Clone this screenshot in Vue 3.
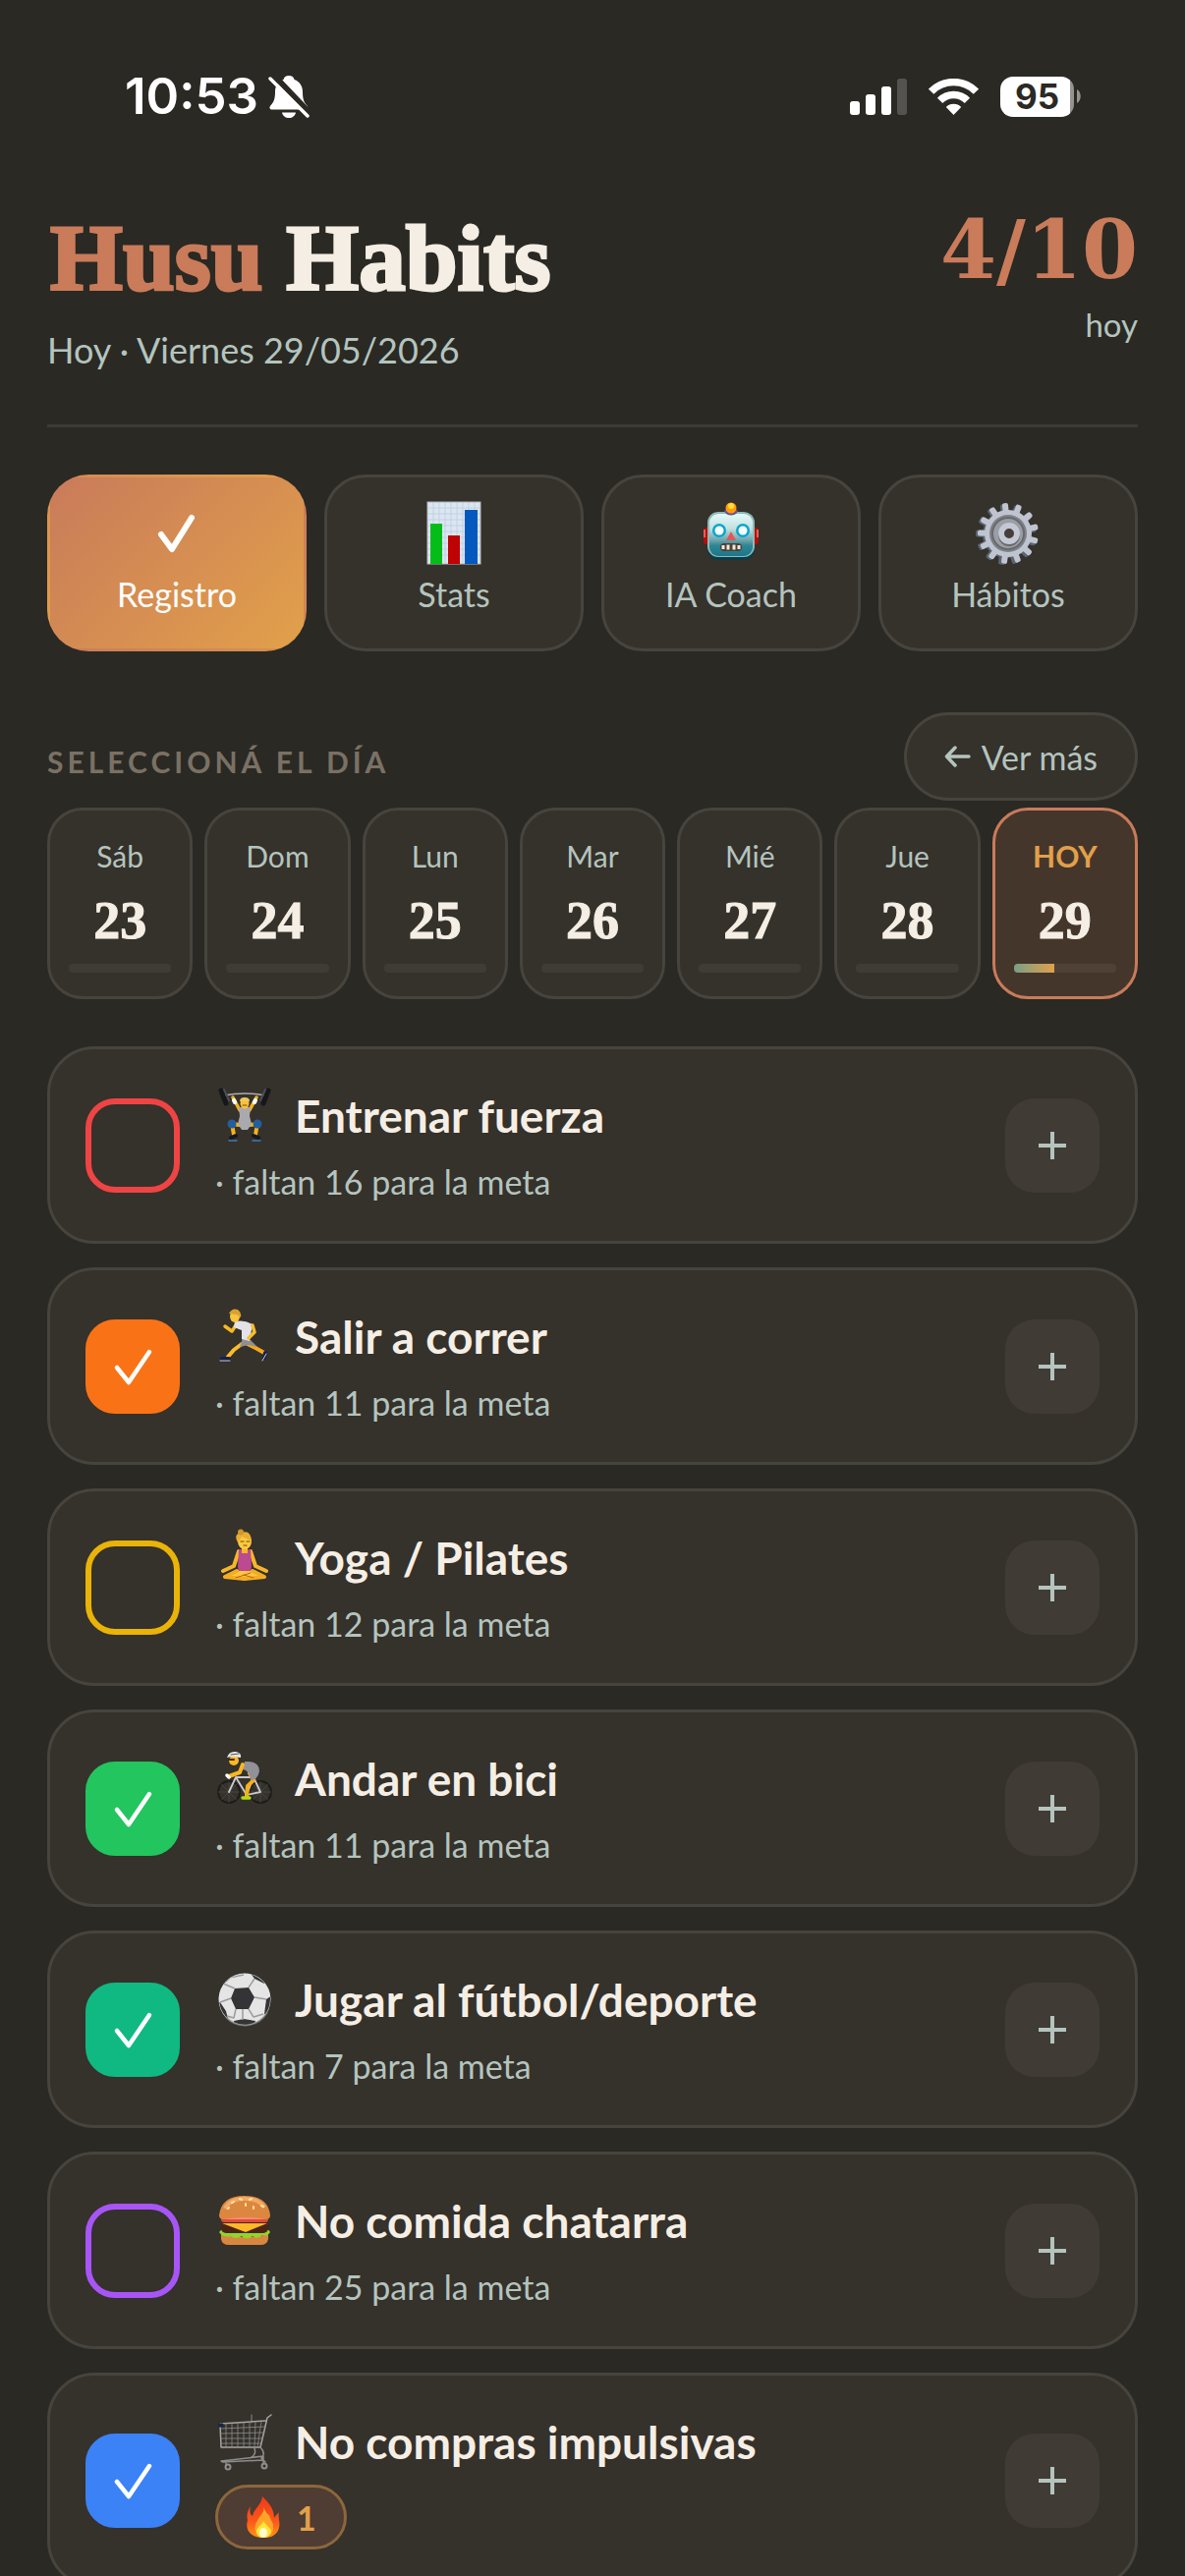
<script setup>
import { ref } from 'vue'

const tabs = [
  { id: 'registro', label: 'Registro', icon: 'check' },
  { id: 'stats', label: 'Stats', icon: 'chart' },
  { id: 'coach', label: 'IA Coach', icon: 'robot' },
  { id: 'habitos', label: 'Hábitos', icon: 'gear' }
]
const activeTab = ref('registro')

const days = [
  { name: 'Sáb', number: 23, progress: 0 },
  { name: 'Dom', number: 24, progress: 0 },
  { name: 'Lun', number: 25, progress: 0 },
  { name: 'Mar', number: 26, progress: 0 },
  { name: 'Mié', number: 27, progress: 0 },
  { name: 'Jue', number: 28, progress: 0 },
  { name: 'HOY', number: 29, progress: 40 }
]
const selectedDay = ref(29)

const habits = ref([
  { id: 'fuerza', name: 'Entrenar fuerza', color: '#ef4444', done: false, left: 16 },
  { id: 'correr', name: 'Salir a correr', color: '#f97316', done: true, left: 11 },
  { id: 'yoga', name: 'Yoga / Pilates', color: '#eab308', done: false, left: 12 },
  { id: 'bici', name: 'Andar en bici', color: '#22c55e', done: true, left: 11 },
  { id: 'futbol', name: 'Jugar al fútbol/deporte', color: '#10b981', done: true, left: 7 },
  { id: 'comida', name: 'No comida chatarra', color: '#a855f7', done: false, left: 25 },
  { id: 'compras', name: 'No compras impulsivas', color: '#3b82f6', done: true, streak: 1 }
])

const teeth = Array.from({ length: 13 }, (_, i) => (i * 360) / 13 - 6)
</script>

<template>
  <div class="screen">
    <div class="status">
      <div class="status-left">
        <span class="time">10:53</span>
        <svg width="42" height="46" viewBox="0 0 42 46" aria-hidden="true">
          <path d="M21 2c3 0 5 1.500 5.500 4 5.500 2 8.500 6.500 8.500 12.500 0 8 1.500 10.500 4.500 14 1.600 2 .8 4-1.500 4H4c-2.500 0-3.300-2-1.700-4 3-3.500 4.700-6 4.700-14C7 12.500 10 8 15.500 6 16 3.500 18 2 21 2z" fill="#fff" />
          <path d="M14 39.500h14c-.6 3.500-3.500 5.500-7 5.500s-6.400-2-7-5.500z" fill="#fff" />
          <path d="M5 1 43 41" stroke="#2a2924" stroke-width="6" />
          <path d="M2 5 40 43" stroke="#fff" stroke-width="3.500" stroke-linecap="round" />
        </svg>
      </div>
      <div class="status-right">
        <svg width="58" height="37" viewBox="0 0 58 37" fill="#fff" aria-hidden="true">
          <rect y="23" width="10" height="14" rx="3" />
          <rect x="16" y="16" width="10" height="21" rx="3" />
          <rect x="32" y="8" width="10" height="29" rx="3" />
          <rect x="48" width="10" height="37" rx="3" fill="#54534f" />
        </svg>
        <svg width="51" height="37" viewBox="0 0 51 37" aria-hidden="true">
          <g fill="none" stroke="#fff" stroke-width="7.500">
            <path d="M2.600 13.200a32 32 0 0 1 45.800 0" />
            <path d="M11.600 22.300a19.500 19.500 0 0 1 27.800 0" />
          </g>
          <path d="M25.500 37 17.800 28.900a11 11 0 0 1 15.400 0z" fill="#fff" />
        </svg>
        <div class="battery">
          <span class="battery-level">95</span>
          <svg width="4" height="14" viewBox="0 0 4 14" aria-hidden="true"><path d="M0 0c5 3 5 11 0 14z" fill="#94938f" /></svg>
        </div>
      </div>
    </div>

    <main class="page">
      <header class="header">
        <div>
          <h1 class="title"><span class="accent">Husu</span> Habits</h1>
          <p class="date">Hoy · Viernes 29/05/2026</p>
        </div>
        <div class="summary">
          <div class="score">4/10</div>
          <div class="score-label">hoy</div>
        </div>
      </header>

      <nav class="tabs">
        <button v-for="tab in tabs" :key="tab.id" type="button" class="tab" :class="{ active: tab.id === activeTab }" @click="activeTab = tab.id">
          <svg class="tab-icon" viewBox="0 0 66 66" aria-hidden="true">
            <path v-if="tab.icon === 'check'" d="M17 34 28 49 48 17" fill="none" stroke="#fff" stroke-width="6" stroke-linecap="round" stroke-linejoin="round" />
            <g v-else-if="tab.icon === 'chart'">
              <rect x="6" y="1" width="54" height="63" fill="#dce6f0" />
              <path d="M6 7h54M6 13h54M6 19h54M6 25h54M6 31h54M6 37h54M6 43h54M6 49h54M6 55h54M12 1v63M18 1v63M24 1v63M30 1v63M36 1v63M42 1v63M48 1v63M54 1v63" stroke="#bfd2e4" stroke-width="1" />
              <rect x="6" y="1" width="54" height="63" fill="none" stroke="#b4b8bd" />
              <rect x="9" y="23" width="12" height="41" fill="#04bd19" />
              <rect x="27" y="35" width="12" height="29" fill="#bd0303" />
              <rect x="44" y="9" width="13" height="55" fill="#0558be" />
            </g>
            <g v-else-if="tab.icon === 'robot'">
              <defs>
                <linearGradient id="robot-face" x1="0" y1="0" x2="0" y2="1">
                  <stop offset="0" stop-color="#e2fbf8" /><stop offset=".35" stop-color="#c3e0df" /><stop offset=".62" stop-color="#6fa5ac" /><stop offset=".75" stop-color="#2f8594" /><stop offset="1" stop-color="#1c7688" />
                </linearGradient>
              </defs>
              <rect x="5" y="27" width="8" height="17" rx="3" fill="#b30d0d" />
              <rect x="53" y="27" width="8" height="17" rx="3" fill="#b30d0d" />
              <path d="M6 29v8M60 29v8" stroke="#ff5a4a" stroke-width="2" />
              <rect x="9" y="12" width="48" height="48" rx="11" fill="#0b3c49" />
              <rect x="9" y="11" width="48" height="46" rx="11" fill="#8fb9ba" />
              <rect x="11" y="13" width="44" height="43" rx="9" fill="url(#robot-face)" />
              <path d="M26 10c3-4 11-4 14 0-2 6-12 6-14 0z" fill="#70518e" />
              <circle cx="33" cy="7" r="5.500" fill="#ff9d0a" /><circle cx="33" cy="5" r="3" fill="#ffdc3a" />
              <circle cx="21" cy="30" r="7" fill="#0aa5cf" /><circle cx="45" cy="30" r="7" fill="#0aa5cf" />
              <circle cx="21" cy="30" r="4.500" fill="#f3fdff" /><circle cx="45" cy="30" r="4.500" fill="#f3fdff" />
              <path d="M33 31 38 40H28z" fill="#e0575a" />
              <rect x="22" y="43" width="22" height="8" rx="4" fill="#4c4139" />
              <path d="M25 45v4M30 44.500v5M36 44.500v5M41 45v4" stroke="#efe9d8" stroke-width="3" />
            </g>
            <g v-else>
              <g transform="translate(-2 1)" fill="#596573">
                <rect v-for="a in teeth" :key="a" x="30" y="2" width="7" height="14" rx="2" :transform="`rotate(${a} 33 33)`" />
                <circle cx="33" cy="33" r="24" />
              </g>
              <g fill="#c0c4d0">
                <rect v-for="a in teeth" :key="a" x="30" y="2" width="6" height="14" rx="2" :transform="`rotate(${a} 33 33)`" />
                <circle cx="33" cy="33" r="24" />
              </g>
              <circle cx="33" cy="33" r="19" fill="#7e8288" />
              <circle cx="33" cy="33" r="16" fill="#9a9ea5" stroke="#676b70" stroke-width="2" />
              <circle cx="34" cy="35" r="11" fill="#6a6668" />
              <circle cx="34" cy="33" r="8" fill="#463e3b" stroke="#c3c8d4" stroke-width="6" />
            </g>
          </svg>
          <span>{{ tab.label }}</span>
        </button>
      </nav>

      <div class="section-head">
        <h2 class="section-title">Seleccioná el día</h2>
        <button type="button" class="more">
          <svg width="27" height="24" viewBox="0 0 27 24" aria-hidden="true"><path d="M25 12H3M11 3 2.500 12l8.500 9" fill="none" stroke="currentColor" stroke-width="3.500" stroke-linecap="round" stroke-linejoin="round" /></svg>
          Ver más
        </button>
      </div>

      <div class="days">
        <button v-for="day in days" :key="day.number" type="button" class="day" :class="{ selected: day.number === selectedDay }" @click="selectedDay = day.number">
          <span class="day-name">{{ day.name }}</span>
          <span class="day-number">{{ day.number }}</span>
          <span class="bar"><span class="bar-fill" :style="{ width: day.progress + '%' }"></span></span>
        </button>
      </div>

      <ul class="habits">
        <li v-for="habit in habits" :key="habit.id" class="habit">
          <span class="box">
            <input :id="habit.id" v-model="habit.done" type="checkbox" class="check" :style="{ '--tone': habit.color }" />
            <svg v-if="habit.done" class="tick" viewBox="0 0 96 96" aria-hidden="true"><path d="M32 49 44 64 65 33" fill="none" stroke="#fff" stroke-width="4.500" stroke-linecap="round" stroke-linejoin="round" /></svg>
          </span>
          <div class="info">
            <label :for="habit.id" class="name">
              <svg class="emoji" viewBox="0 0 60 60" aria-hidden="true">
                <g v-if="habit.id === 'fuerza'" fill="none" stroke-linecap="round" stroke-linejoin="round">
                  <path d="M9 9Q30 5 51 9" stroke="#a9adb1" stroke-width="1.500" />
                  <path d="M18 11 25 24M42 11 35 24" stroke="#f5b31c" stroke-width="3.500" />
                  <path d="M19 14l1 2M41 14l-1 2" stroke="#fff" stroke-width="4" />
                  <path d="M25 39 17 38 19 49M35 39 43 38 41 49" stroke="#f5b31c" stroke-width="4" />
                  <path d="M24 21h12l-1 9 2 8-4 6h-6l-4-6 2-8z" fill="#a9a9ae" />
                  <circle cx="17" cy="38" r="4.500" fill="#235f9d" /><circle cx="43" cy="38" r="4.500" fill="#235f9d" />
                  <path d="M16 52l5-2M44 52l-5-2" stroke="#17191f" stroke-width="4" />
                  <path d="M14 55h8M46 55h-8" stroke="#3a7cb8" stroke-width="1.500" />
                  <ellipse cx="30" cy="17" rx="4.500" ry="5.500" fill="#f9c13a" /><path d="M25 15q0-4 5-4t5 4z" fill="#edc95d" /><path d="M28 19h4" stroke="#7a4d1c" stroke-width="1" />
                  <path d="M6 4 11 17M54 4 49 17" stroke="#16171a" stroke-width="5" />
                  <path d="M9 3 14 14M51 3 46 14" stroke="#4a4d52" stroke-width="2" />
                </g>
                <g v-else-if="habit.id === 'correr'" fill="none" stroke-linecap="round" stroke-linejoin="round">
                  <path d="M21 18 17 24 10 19" stroke="#f7b825" stroke-width="3.500" />
                  <path d="M33 37 41 41 50 46" stroke="#f3a91c" stroke-width="4" />
                  <path d="M27 37 19 43 13 50" stroke="#f9bd2c" stroke-width="4" />
                  <path d="M36 33 43 40 34 38 25 40 28 31z" fill="#8f8f93" />
                  <path d="M20 14Q30 12 38 17L35 34 27 32 27 23 19 20z" fill="#e3e2e7" />
                  <path d="M38 18 40 25 34 31" stroke="#f9bd2c" stroke-width="3.500" />
                  <path d="M7 52 14 52M51 46 50 51" stroke="#16214e" stroke-width="4" />
                  <path d="M5 54h10M48 54l4-7" stroke="#c9cad4" stroke-width="1" />
                  <ellipse cx="20" cy="9" rx="5" ry="6" fill="#f9c43e" /><path d="M14 6q3-6 9-4 4 3 3 8l-4-3z" fill="#d7a22f" />
                </g>
                <g v-else-if="habit.id === 'yoga'" fill="none" stroke-linecap="round" stroke-linejoin="round">
                  <path d="M24 23 19 38 8 43M36 23 41 38 52 43" stroke="#f6b62b" stroke-width="4" />
                  <path d="M24 21h12l1 18-2 7H25l-2-7z" fill="#bb4a91" />
                  <path d="M27 20h6v5h-6z" fill="#f6b62b" />
                  <path d="M22 43 10 49 30 51 50 49 38 43" fill="#ffc640" stroke="#f2ad22" stroke-width="4" />
                  <path d="M21 50 36 45M39 50 29 47" stroke="#b96813" stroke-width="1" />
                  <ellipse cx="30" cy="13" rx="7" ry="8" fill="#fcca3d" />
                  <path d="M23 14Q18 5 27 4 36 1 37 12 31 10 27 8z" fill="#e8ae32" /><circle cx="26" cy="3.500" r="3" fill="#d4972a" />
                  <path d="M26 13h3M32 13h3M29 17h3" stroke="#724318" stroke-width="1.200" />
                </g>
                <g v-else-if="habit.id === 'bici'" fill="none" stroke-linecap="round" stroke-linejoin="round">
                  <g stroke="#1b1b1a" stroke-width="1.800"><circle cx="14" cy="43" r="11" /><circle cx="46" cy="43" r="11" /></g>
                  <path d="M14 32v22M3 43h22M6 35l16 16M22 35 6 51M46 32v22M35 43h22M38 35l16 16M54 35 38 51" stroke="#66655f" stroke-width=".4" />
                  <path d="M14 43 21 28H39L32 46 21 28M39 28 46 43 32 46" stroke="#c8cace" stroke-width="1.800" />
                  <path d="M35 24 39 31 33 37 32 47" stroke="#f5af18" stroke-width="4" />
                  <path d="M30 12Q45 11 45 22 43 31 36 31 35 21 28 20z" fill="#919197" />
                  <path d="M28 15 25 23 14 27" stroke="#f7b721" stroke-width="4" /><path d="M12 26l2 2" stroke="#fff" stroke-width="3.500" />
                  <path d="M28 49h7" stroke="#b2db12" stroke-width="3.500" />
                  <circle cx="19" cy="11" r="5" fill="#f8b926" /><path d="M12 8Q14 1 21 2 27 3 26 8L16 7z" fill="#e6e5e2" /><path d="M16 5l8-1" stroke="#55565b" /><path d="M14 10h5" stroke="#4c2a0b" stroke-width="2" />
                </g>
                <g v-else-if="habit.id === 'futbol'">
                  <clipPath id="ball"><circle cx="30" cy="29" r="26" /></clipPath>
                  <circle cx="30" cy="29" r="26.500" fill="#e5e5e5" />
                  <g clip-path="url(#ball)">
                    <path d="M20 18 34 17 40 27 34 39H21L16 28zM35 1 50 7 50 13 40 8zM59 24 52 29 50 44 58 46zM2 10l8-4 5 2-8 7zM1 33l4-1 6 9 2 8-7-3zM19 51l10-2 12 2-2 8H20z" fill="#343436" />
                    <path d="M20 18 8 13M34 17 40 8M40 27l12 2M34 39l5 8M21 39l-2 9M16 28 5 32M15 7l14-3M39 47l10-3M19 48 12 46M28 39v11" stroke="#9b9b9b" stroke-width="1.500" fill="none" />
                  </g>
                  <path d="M11 47a26 26 0 0 0 42-5" stroke="#8c8c8c" stroke-width="2" fill="none" opacity=".6" />
                </g>
                <g v-else-if="habit.id === 'comida'">
                  <path d="M6 43q24 6 48 0v5q-1 6-8 6H14q-7 0-8-6z" fill="#d98740" />
                  <path d="M4 41q3-4 9-3h34q7-1 9 3-3 5-8 3-5 5-10 1-6 5-11 0-6 4-11 0-8 2-12-4z" fill="#8fd52c" />
                  <rect x="6" y="31" width="48" height="11" rx="5" fill="#4b2416" />
                  <path d="M7 32h46L31 41z" fill="#ffb928" />
                  <rect x="6" y="25" width="48" height="6" rx="3" fill="#e04a3a" /><path d="M8 27h44" stroke="#ff8d77" stroke-width="2" />
                  <path d="M4 24Q6 4 30 4t26 20q0 4-5 4-21-4-42 0-5 0-5-4z" fill="#dc873f" />
                  <path d="M10 17Q15 7 30 7t20 9" stroke="#f2a965" stroke-width="4" fill="none" />
                  <path d="M17 11l2-1M25 7l2 1M35 8l2-1M39 15v2M47 14l2 1M31 12v2M13 17l1-1" stroke="#ffe2a3" stroke-width="2" stroke-linecap="round" />
                </g>
                <g v-else fill="none" stroke="#8d8d8b" stroke-linecap="round" stroke-linejoin="round">
                  <path d="M57 2 53 5 46 35H6L5 11 51 8" stroke="#a5a5a3" stroke-width="1.500" />
                  <path d="M5 16l46-2M5 21l45-1M6 26h42M6 31h41M11 11v24M17 11v24M23 10v25M29 10v25M35 9v26M41 9l-1 26M47 9l-4 26" stroke-width=".8" />
                  <path d="M37 2v8" stroke-width="1" />
                  <path d="M46 35q6 6 1 11l4 4M40 36q2 6-3 9M6 49l43-5v4L8 50zM11 50v4M49 48v4" stroke-width="1.500" />
                  <circle cx="13" cy="55" r="2.500" stroke-width="2" /><circle cx="50" cy="54" r="2.500" stroke-width="2" />
                  <path d="M4 11h4v3H4z" fill="#142947" stroke="#142947" />
                </g>
              </svg>
              <span>{{ habit.name }}</span>
            </label>
            <div v-if="habit.streak" class="streak">
              <svg width="36" height="42" viewBox="0 0 36 42" aria-hidden="true">
                <defs><linearGradient id="flame" x1="0" y1="0" x2="0" y2="1"><stop offset="0" stop-color="#f0391b" /><stop offset=".6" stop-color="#fb571a" /><stop offset="1" stop-color="#ff9416" /></linearGradient></defs>
                <path d="M17 0C16 9 8 13 7 20 4 18 4 15 5 10 1 16 1 20 2 24-1 34 5 41 15 42h6C31 41 36 34 34 24 34 21 33 19 34 16 31 19 30 20 29 22 29 12 23 6 17 0z" fill="url(#flame)" />
                <path d="M18 11C20 17 12 21 10 29 8 37 12 42 18 42S29 38 28 30C28 26 25 24 24 19 22 18 20 15 18 11z" fill="#ffa329" />
                <path d="M18 25C17 29 11 31 11 36q1 6 7 6t8-6C26 32 21 30 18 25z" fill="#ffe739" />
                <ellipse cx="18" cy="37" rx="4" ry="5" fill="#fffbd0" />
              </svg>
              <span>{{ habit.streak }}</span>
            </div>
            <p v-else class="left">· faltan {{ habit.left }} para la meta</p>
          </div>
          <button type="button" class="add" :aria-label="'Agregar nota a ' + habit.name">
            <svg width="28" height="28" viewBox="0 0 28 28" aria-hidden="true"><path d="M14 0v28M0 14h28" stroke="currentColor" stroke-width="4" /></svg>
          </button>
        </li>
      </ul>
    </main>
  </div>
</template>

<style>
body {
  background: #2a2924;
}
</style>

<style scoped>
.screen {
  height: 100vh;
  overflow-y: auto;
  scrollbar-width: none;
  background: #2a2924;
  color: #f5eee4;
  font-family: Lato, "Noto Sans", sans-serif;
}
.screen * {
  box-sizing: border-box;
}
button {
  font-family: inherit;
  margin: 0;
  padding: 0;
  cursor: pointer;
}
h1, h2, p, ul {
  margin: 0;
  padding: 0;
}
svg {
  display: block;
  flex: none;
}

.status {
  display: flex;
  justify-content: space-between;
  align-items: center;
  padding: 68px 106px 84px 127px;
  height: 212px;
}
.status-left {
  display: flex;
  align-items: center;
  gap: 10px;
}
.time {
  font: 600 51px/60px Inter, sans-serif;
  color: #fff;
}
.status-right {
  display: flex;
  align-items: center;
  gap: 22px;
}
.battery {
  display: flex;
  align-items: center;
  gap: 3px;
}
.battery-level {
  width: 75px;
  height: 41px;
  border-radius: 13px;
  background: linear-gradient(90deg, #fff 95%, #94938f 95%);
  color: #2a2924;
  font: 700 35px/41px Inter, sans-serif;
  text-align: center;
}

.page {
  padding: 0 48px 48px;
}
.header {
  display: flex;
  justify-content: space-between;
  align-items: flex-start;
  padding-bottom: 49px;
  border-bottom: 3px solid #3e3b36;
}
.title {
  padding-left: 3px;
  font: 700 95px/102px "Liberation Serif", serif;
  -webkit-text-stroke: 3px currentColor;
}
.accent {
  color: #c97b5a;
}
.date {
  margin-top: 15px;
  font-size: 36px;
  line-height: 54px;
  color: #b4c4be;
}
.summary {
  text-align: right;
}
.score {
  font: 700 82px/84px "DejaVu Serif", serif;
  color: #c97b5a;
}
.score-label {
  margin-top: 10px;
  font-size: 33px;
  line-height: 48px;
  color: #b4c4be;
}

.tabs {
  display: grid;
  grid-template-columns: repeat(4, 1fr);
  gap: 18px;
  margin-top: 48px;
}
.tab {
  display: flex;
  flex-direction: column;
  align-items: center;
  gap: 8px;
  padding: 24px 0 34px;
  border: 3px solid #47443e;
  border-radius: 42px;
  background: #35312b;
  color: #b4c4be;
  font-size: 34px;
  line-height: 42px;
}
.tab.active {
  border-color: transparent;
  background: linear-gradient(135deg, #c97b5a, #e2a04a);
  color: #fff;
}
.tab-icon {
  width: 66px;
  height: 66px;
}

.section-head {
  display: flex;
  justify-content: space-between;
  align-items: flex-end;
  margin-top: 62px;
}
.section-title {
  padding-bottom: 19px;
  font-size: 30px;
  line-height: 42px;
  font-weight: 700;
  letter-spacing: 4px;
  text-transform: uppercase;
  color: #7a7164;
}
.more {
  display: flex;
  align-items: center;
  gap: 11px;
  height: 90px;
  padding: 0 38px;
  border: 3px solid #47443e;
  border-radius: 45px;
  background: #35312b;
  color: #b4c4be;
  font-size: 34px;
}

.days {
  display: grid;
  grid-template-columns: repeat(7, 1fr);
  gap: 12px;
  margin-top: 7px;
}
.day {
  display: flex;
  flex-direction: column;
  align-items: stretch;
  padding: 28px 19px 24px;
  border: 3px solid #47443e;
  border-radius: 36px;
  background: #35312b;
  color: #f5eee4;
  text-align: center;
}
.day-name {
  font-size: 30px;
  line-height: 36px;
  color: #b4c4be;
}
.day-number {
  margin-top: 18px;
  font: 700 54px/60px "Liberation Serif", serif;
  -webkit-text-stroke: 1px currentColor;
}
.bar {
  height: 9px;
  margin-top: 14px;
  border-radius: 4px;
  background: #3f3b35;
  overflow: hidden;
}
.bar-fill {
  display: block;
  height: 100%;
  background: linear-gradient(90deg, #7a9e87, #e2a04a);
}
.day.selected {
  border-color: #c97b5a;
  background: #45362c;
}
.selected .day-name {
  color: #e2a04a;
  font-weight: 700;
}
.selected .bar {
  background: #504136;
}

.habits {
  display: flex;
  flex-direction: column;
  gap: 24px;
  margin-top: 48px;
  list-style: none;
}
.habit {
  display: flex;
  align-items: center;
  gap: 36px;
  padding: 36px;
  border: 3px solid #47443e;
  border-radius: 48px;
  background: #35312b;
}
.box {
  display: grid;
  flex: none;
}
.box > * {
  grid-area: 1 / 1;
}
.check {
  appearance: none;
  width: 96px;
  height: 96px;
  margin: 0;
  border: 6px solid var(--tone);
  border-radius: 30px;
}
.check:checked {
  background: var(--tone);
}
.tick {
  width: 96px;
  height: 96px;
  pointer-events: none;
}
.info {
  flex: 1;
}
.name {
  display: flex;
  align-items: center;
  gap: 21px;
  font-size: 46px;
  line-height: 63px;
  font-weight: 700;
}
.emoji {
  width: 60px;
  height: 60px;
}
.left {
  margin-top: 12px;
  font-size: 34px;
  line-height: 48px;
  color: #b4c4be;
}
.streak {
  display: flex;
  align-items: center;
  gap: 16px;
  width: fit-content;
  height: 66px;
  margin-top: 12px;
  padding: 0 28px;
  border: 3px solid #8c673d;
  border-radius: 33px;
  background: #4f3c32;
  color: #e2a04a;
  font-size: 34px;
  font-weight: 700;
}
.add {
  display: flex;
  align-items: center;
  justify-content: center;
  flex: none;
  width: 96px;
  height: 96px;
  border: 0;
  border-radius: 30px;
  background: #403b35;
  color: #b4c4be;
}
</style>
